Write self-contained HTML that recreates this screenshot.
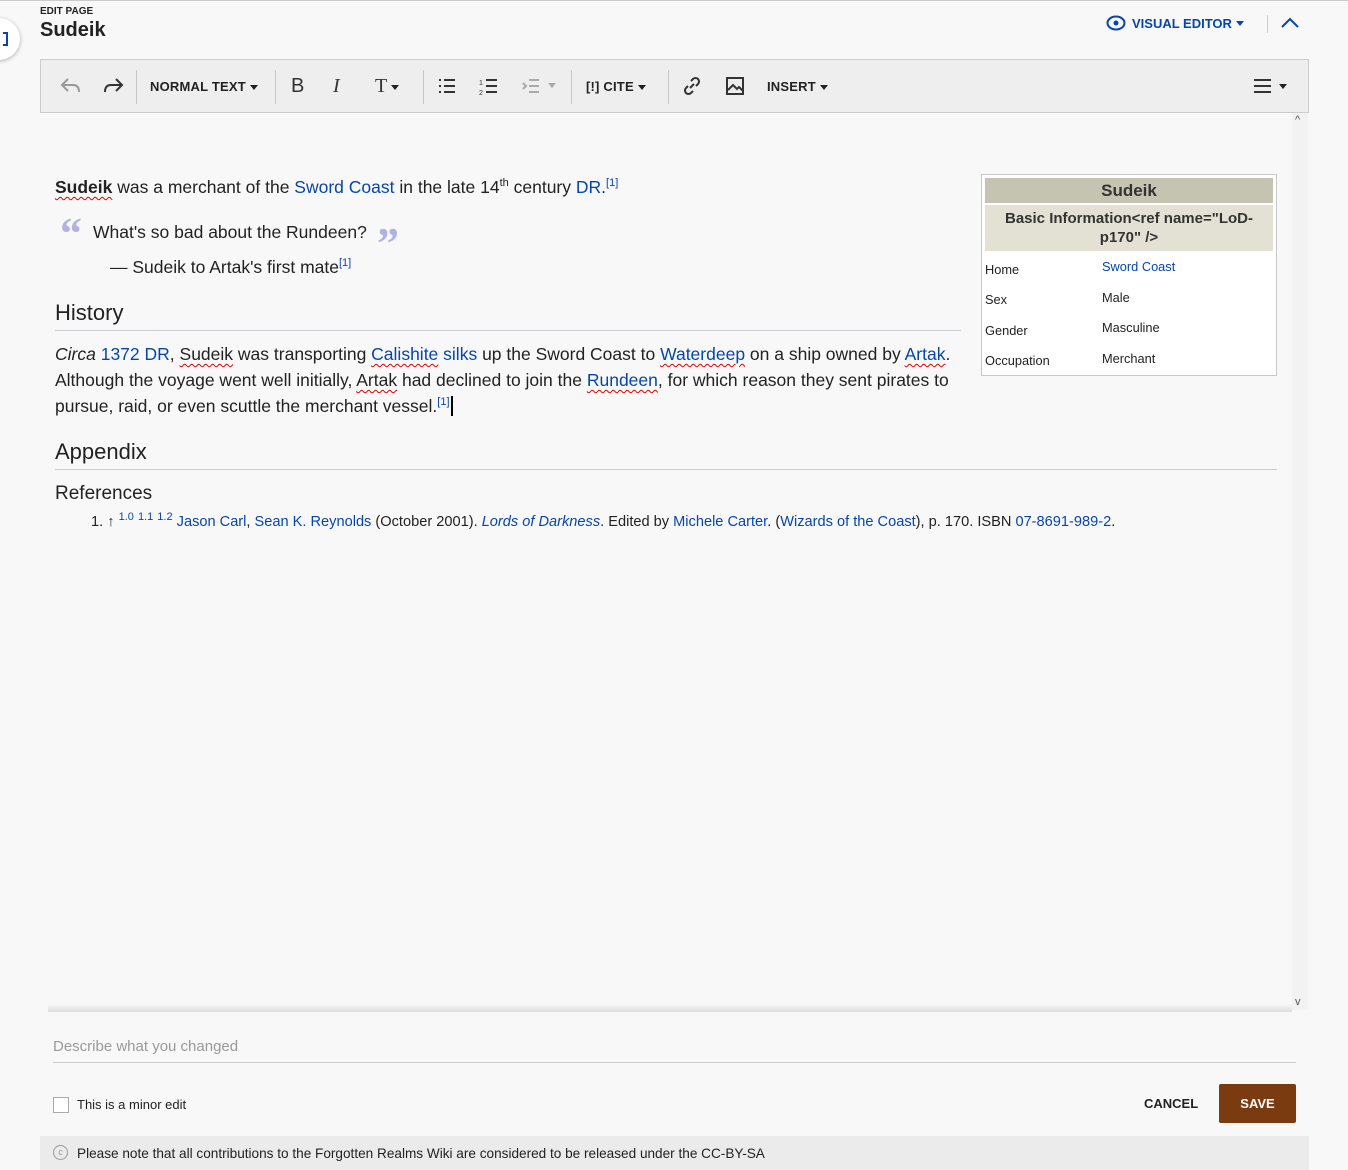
<!DOCTYPE html>
<html><head><meta charset="utf-8"><style>
*{margin:0;padding:0;box-sizing:border-box}
body{width:1348px;height:1170px;background:#f8f8f8;font-family:"Liberation Sans",Arial,sans-serif;color:#222;position:relative;overflow:hidden}
.a{position:absolute}
a,.l{color:#0645ad;text-decoration:none}
.sq{text-decoration:underline wavy #d00;text-decoration-thickness:1px;text-underline-offset:3px}
.tb{font-weight:bold;font-size:13px;color:#222;letter-spacing:.2px}
.sep{position:absolute;top:10px;width:1px;height:34px;background:#c8c8c8}
.p{font-size:17.5px;line-height:26px;color:#222}
sup{font-size:11px;line-height:0}
.h2{font-size:22px;color:#222}
.hr{height:1px;background:#c8ccd1}
.tri{display:inline-block;width:0;height:0;border-left:4px solid transparent;border-right:4px solid transparent;border-top:5px solid #222;vertical-align:middle;margin-left:4px}
.q{font-size:44px;color:#b0b3e0;font-weight:bold;font-family:"Liberation Serif",serif;line-height:44px}
</style></head><body>
<div class="a" style="left:0;top:0;width:1348px;height:1px;background:#ccc"></div>
<div class="a" style="left:-22px;top:18px;width:42px;height:42px;border-radius:50%;background:#fff;box-shadow:0 1px 4px rgba(0,0,0,.3)"></div>
<div class="a" style="left:3px;top:32px;width:5px;height:14px;border:2px solid #0645ad;border-left:none"></div>
<div class="a" style="left:40px;top:6px;font-size:10px;font-weight:bold;color:#222">EDIT PAGE</div>
<div class="a" style="left:40px;top:19px;font-size:20px;font-weight:bold;color:#222">Sudeik</div>
<div class="a" style="left:1106px;top:15px;font-size:13px;font-weight:bold;color:#0645ad;display:flex;align-items:center">
<svg width="20" height="16" viewBox="0 0 20 16"><ellipse cx="10" cy="8" rx="8.5" ry="6.5" fill="none" stroke="#0645ad" stroke-width="2"/><circle cx="10" cy="8" r="2.5" fill="#0645ad"/></svg>
<span style="margin-left:6px">VISUAL EDITOR</span><span class="tri" style="border-top-color:#0645ad"></span></div>
<div class="a" style="left:1267px;top:15px;width:1px;height:18px;background:#ccc"></div>
<svg class="a" style="left:1280px;top:16px" width="20" height="14" viewBox="0 0 20 14"><path d="M2 11 L10 3 L18 11" fill="none" stroke="#0645ad" stroke-width="2"/></svg>

<div class="a" style="left:40px;top:59px;width:1269px;height:54px;background:#eeeeee;border:1px solid #ccc">
<svg class="a" style="left:18px;top:15px" width="24" height="22" viewBox="0 0 24 22"><path d="M9 4 L3 10 L9 16 M3 10 H14 Q20 10 20 17" fill="none" stroke="#999" stroke-width="2"/></svg>
<svg class="a" style="left:60px;top:15px" width="24" height="22" viewBox="0 0 24 22"><path d="M15 4 L21 10 L15 16 M21 10 H10 Q4 10 4 17" fill="none" stroke="#333" stroke-width="2"/></svg>
<div class="sep" style="left:95px"></div>
<div class="a tb" style="left:109px;top:19px">NORMAL TEXT<span class="tri"></span></div>
<div class="sep" style="left:234px"></div>
<div class="a" style="left:250px;top:15px;font-size:20px;color:#333">B</div>
<div class="a" style="left:292px;top:15px;font-size:20px;font-style:italic;color:#333;font-family:'Liberation Serif',serif">I</div>
<div class="a" style="left:334px;top:15px;font-size:20px;color:#333;font-family:'Liberation Serif',serif">T<span class="tri"></span></div>
<div class="sep" style="left:382px"></div>
<svg class="a" style="left:396px;top:16px" width="20" height="20" viewBox="0 0 20 20"><path d="M2 4h2M2 10h2M2 16h2M7 4h11M7 10h11M7 16h11" stroke="#333" stroke-width="2"/></svg>
<svg class="a" style="left:438px;top:16px" width="20" height="20" viewBox="0 0 20 20"><path d="M7 4h11M7 10h11M7 16h11" stroke="#333" stroke-width="2"/><text x="0" y="9" font-size="7" fill="#333">1</text><text x="0" y="19" font-size="7" fill="#333">2</text></svg>
<svg class="a" style="left:480px;top:16px" width="20" height="20" viewBox="0 0 20 20"><path d="M8 4h10M8 10h10M8 16h10M2 7l3 3-3 3" stroke="#aaa" stroke-width="2" fill="none"/></svg>
<span class="tri a" style="left:503px;top:23px;border-top-color:#aaa"></span>
<div class="sep" style="left:530px"></div>
<div class="a tb" style="left:545px;top:19px">[!] CITE<span class="tri"></span></div>
<div class="sep" style="left:627px"></div>
<svg class="a" style="left:641px;top:16px" width="20" height="20" viewBox="0 0 20 20"><path d="M8 12l4-4M9 5l2-2a3.5 3.5 0 015 5l-2 2M11 15l-2 2a3.5 3.5 0 01-5-5l2-2" stroke="#333" stroke-width="2" fill="none"/></svg>
<svg class="a" style="left:684px;top:16px" width="20" height="20" viewBox="0 0 20 20"><rect x="2" y="2" width="16" height="16" fill="none" stroke="#333" stroke-width="2"/><path d="M3 14l5-5 4 4 2-2 4 4" stroke="#333" stroke-width="2" fill="none"/></svg>
<div class="a tb" style="left:726px;top:19px">INSERT<span class="tri"></span></div>
<svg class="a" style="left:1212px;top:17px" width="20" height="18" viewBox="0 0 20 18"><path d="M1 3h17M1 9h17M1 15h17" stroke="#333" stroke-width="2"/></svg>
<span class="tri a" style="left:1234px;top:24px"></span>
</div>

<div class="a" style="left:1292px;top:113px;width:16px;height:897px;background:#f2f2f2"></div>
<div class="a" style="left:1295px;top:114px;font-size:11px;color:#555">^</div>
<div class="a" style="left:1295px;top:996px;font-size:11px;color:#555">v</div>

<div class="a p" style="left:55px;top:174px"><b class="sq">Sudeik</b> was a merchant of the <a>Sword Coast</a> in the late 14<sup>th</sup> century <a>DR</a>.<sup class="l">[1]</sup></div>
<div class="a q" style="left:60px;top:212px">“</div>
<div class="a p" style="left:93px;top:219px">What's so bad about the Rundeen?</div>
<div class="a q" style="left:377px;top:222px">”</div>
<div class="a p" style="left:110px;top:254px">— Sudeik to Artak's first mate<sup class="l">[1]</sup></div>
<div class="a h2" style="left:55px;top:300px">History</div>
<div class="a hr" style="left:55px;top:330px;width:906px"></div>
<div class="a p" style="left:55px;top:341px;width:915px"><i>Circa</i> <a>1372 DR</a>, <span class="sq">Sudeik</span> was transporting <a class="sq">Calishite</a> <a>silks</a> up the Sword Coast to <a class="sq">Waterdeep</a> on a ship owned by <a class="sq">Artak</a>. Although the voyage went well initially, <span class="sq">Artak</span> had declined to join the <a class="sq">Rundeen</a>, for which reason they sent pirates to pursue, raid, or even scuttle the merchant vessel.<sup class="l">[1]</sup><span style="border-left:2px solid #000;margin-left:1px"></span></div>
<div class="a h2" style="left:55px;top:439px">Appendix</div>
<div class="a hr" style="left:55px;top:469px;width:1222px"></div>
<div class="a" style="left:55px;top:483px;font-size:19px;color:#222">References</div>
<div class="a" style="left:91px;top:514px;font-size:14.6px;color:#222">1. ↑ <sup class="l">1.0</sup> <sup class="l">1.1</sup> <sup class="l">1.2</sup> <a>Jason Carl</a>, <a>Sean K. Reynolds</a> (October 2001). <a><i>Lords of Darkness</i></a>. Edited by <a>Michele Carter</a>. (<a>Wizards of the Coast</a>), p. 170. ISBN <a>07-8691-989-2</a>.</div>

<div class="a" style="left:981px;top:174px;width:296px;height:202px;border:1px solid #c8c8c8;background:#fff;padding:3px">
<div style="background:#c5c3b2;height:25px;text-align:center;font-weight:bold;font-size:17px;line-height:25px;color:#333">Sudeik</div>
<div style="background:#e3e1d4;margin-top:2px;height:46px;text-align:center;font-weight:bold;font-size:15px;line-height:19px;padding-top:4px;color:#333">Basic Information&lt;ref name="LoD-<br>p170" /&gt;</div>
<div style="font-size:12.8px;color:#222;position:relative;height:120px">
<div class="a" style="left:0;top:11px">Home</div><div class="a l" style="left:117px;top:8px">Sword Coast</div>
<div class="a" style="left:0;top:41px">Sex</div><div class="a" style="left:117px;top:39px">Male</div>
<div class="a" style="left:0;top:72px">Gender</div><div class="a" style="left:117px;top:69px">Masculine</div>
<div class="a" style="left:0;top:102px">Occupation</div><div class="a" style="left:117px;top:100px">Merchant</div>
</div></div>

<div class="a" style="left:48px;top:1004px;width:1244px;height:8px;background:linear-gradient(#f8f8f8,#dcdcdc)"></div>
<div class="a" style="left:53px;top:1038px;font-size:15px;color:#999">Describe what you changed</div>
<div class="a" style="left:53px;top:1062px;width:1243px;height:1px;background:#ccc"></div>
<div class="a" style="left:53px;top:1097px;width:16px;height:16px;border:1px solid #aaa;background:#fff"></div>
<div class="a" style="left:77px;top:1097px;font-size:13px;color:#222">This is a minor edit</div>
<div class="a" style="left:1144px;top:1096px;font-size:13px;font-weight:bold;color:#222">CANCEL</div>
<div class="a" style="left:1219px;top:1084px;width:77px;height:39px;background:#7a3b10;border-radius:2px;color:#fff;font-size:13px;font-weight:bold;text-align:center;line-height:39px">SAVE</div>
<div class="a" style="left:40px;top:1136px;width:1269px;height:34px;background:#ebebeb"></div>
<div class="a" style="left:53px;top:1145px;width:15px;height:15px;border:1.5px solid #999;border-radius:50%;font-size:9px;color:#999;text-align:center;line-height:12px">c</div>
<div class="a" style="left:77px;top:1146px;font-size:13.6px;color:#222">Please note that all contributions to the Forgotten Realms Wiki are considered to be released under the CC-BY-SA</div>
</body></html>
